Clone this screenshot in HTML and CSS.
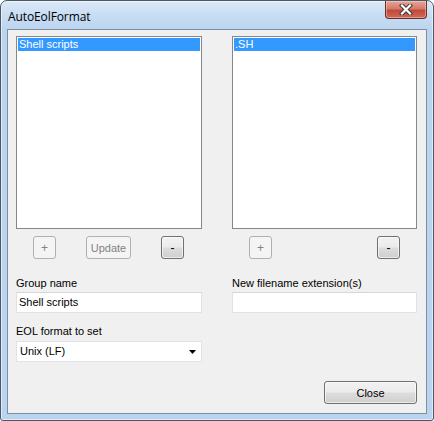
FILE: index.html
```html
<!DOCTYPE html>
<html>
<head>
<meta charset="utf-8">
<link rel="stylesheet" href="styles.css">
</head>
<body>
<div class="window">
  <div class="titlebar">
    <span class="title">AutoEolFormat</span>
    <div class="close-x">
      <svg width="14" height="11" viewBox="0 0 14 11">
        <path d="M3 1.5 L11 9.5 M11 1.5 L3 9.5" stroke="#3b3b3b" stroke-width="4.2" stroke-linecap="square" fill="none"/>
        <path d="M3 1.5 L11 9.5 M11 1.5 L3 9.5" stroke="#ffffff" stroke-width="2.2" stroke-linecap="square" fill="none"/>
      </svg>
    </div>
  </div>
  <div class="client">
    <div class="grid">
      <div class="col">
        <div class="listbox"><div class="item sel">Shell scripts</div></div>
        <div class="btnrow">
          <button class="btn small disabled">+</button>
          <button class="btn update disabled">Update</button>
          <button class="btn small minus">-</button>
        </div>
        <div class="lbl">Group name</div>
        <div class="field">Shell scripts</div>
        <div class="lbl lbl2">EOL format to set</div>
        <div class="combo"><span>Unix (LF)</span>
          <svg class="arrow" width="7" height="4" viewBox="0 0 7 4"><path d="M0 0 H7 L3.5 4 Z" fill="#000"/></svg>
        </div>
      </div>
      <div class="col">
        <div class="listbox"><div class="item sel">.SH</div></div>
        <div class="btnrow">
          <button class="btn small disabled">+</button>
          <button class="btn small minus">-</button>
        </div>
        <div class="lbl">New filename extension(s)</div>
        <div class="field"></div>
      </div>
    </div>
    <div class="footer">
      <button class="btn closebtn">Close</button>
    </div>
  </div>
</div>
</body>
</html>
```

FILE: styles.css
```css
* { box-sizing: border-box; }
html, body { margin: 0; padding: 0; background: #ffffff; }
body { width: 434px; height: 421px; overflow: hidden; }

.window {
  position: relative;
  width: 434px;
  height: 421px;
  border: 1px solid #4a5868;
  border-radius: 7px 7px 3px 3px;
  background: linear-gradient(to bottom, #dce9f7 0px, #c8ddf3 14px, #bcd5ef 28px, #bad3ee 100%);
  box-shadow: inset 0 0 0 1px rgba(255,255,255,0.55);
  padding: 0 6px 6px 6px;
  display: flex;
  flex-direction: column;
  font-family: "Liberation Sans", Arial, sans-serif;
  font-size: 11px;
  color: #000;
}

.titlebar {
  height: 28px;
  flex: none;
  display: flex;
  align-items: center;
  padding-left: 1px;
  padding-top: 2px;
}
.title {
  font-family: "Open Sans", "Noto Sans", sans-serif;
  font-size: 12px;
  color: #000;
  letter-spacing: -0.1px;
}

.close-x {
  position: absolute;
  top: 0;
  right: 6px;
  width: 42px;
  height: 18px;
  border: 1px solid #6b2e27;
  border-top: none;
  border-radius: 0 0 4px 4px;
  background: linear-gradient(to bottom, #e7a597 0%, #d47a6a 45%, #c2493a 55%, #cf6a55 100%);
  box-shadow: inset 0 0 0 1px rgba(255,255,255,0.35);
  display: flex;
  align-items: center;
  justify-content: center;
}

.client {
  flex: 1;
  border: 1px solid #7d8ea2;
  background: #f0f0f0;
  padding: 6px 9px 9px 8px;
  display: flex;
  flex-direction: column;
}

.grid {
  display: grid;
  grid-template-columns: 186px 185px;
  column-gap: 30px;
}
.col { display: flex; flex-direction: column; }

.listbox {
  height: 193px;
  border: 1px solid #828790;
  background: #fff;
  padding: 1px;
}
.item {
  height: 13px;
  line-height: 13px;
  padding-left: 1px;
  white-space: nowrap;
}
.item.sel { background: #3399ff; color: #fff; }

.btnrow {
  margin-top: 7px;
  display: grid;
  grid-template-columns: 23px 45px 23px;
  column-gap: 30px;
  padding-left: 17px;
}
.btnrow .minus { grid-column: 3; }

.btn {
  font-family: "Liberation Sans", Arial, sans-serif;
  font-size: 11px;
  height: 23px;
  padding: 0;
  border: 1px solid #707070;
  border-radius: 3px;
  background: linear-gradient(to bottom, #f2f2f2 0%, #ebebeb 48%, #dddddd 52%, #cfcfcf 100%);
  box-shadow: inset 0 0 0 1px rgba(255,255,255,0.6);
  color: #000;
  line-height: 20px;
}
.btn.disabled {
  border-color: #adb2b5;
  background: #f4f4f4;
  box-shadow: none;
  color: #838383;
}
.btn.small { width: 23px; font-size: 12px; }
.btn.update { width: 45px; }

.lbl {
  margin-top: 18px;
  height: 13px;
  line-height: 13px;
  white-space: nowrap;
}
.lbl.lbl2 { margin-top: 12px; }

.field {
  margin-top: 2px;
  height: 21px;
  border: 1px solid #dfe3e8;
  border-top-color: #d4d8dd;
  background: #fff;
  padding-left: 2px;
  line-height: 19px;
}

.combo {
  margin-top: 3px;
  height: 21px;
  border: 1px solid #dfe3e8;
  background: #fff;
  padding-left: 3px;
  line-height: 19px;
  display: flex;
  align-items: center;
  justify-content: space-between;
  padding-right: 5px;
}
.combo .arrow { display: block; margin-top: 1px; }

.footer {
  margin-top: auto;
  display: flex;
  justify-content: flex-end;
}
.btn.closebtn { width: 93px; }
```
